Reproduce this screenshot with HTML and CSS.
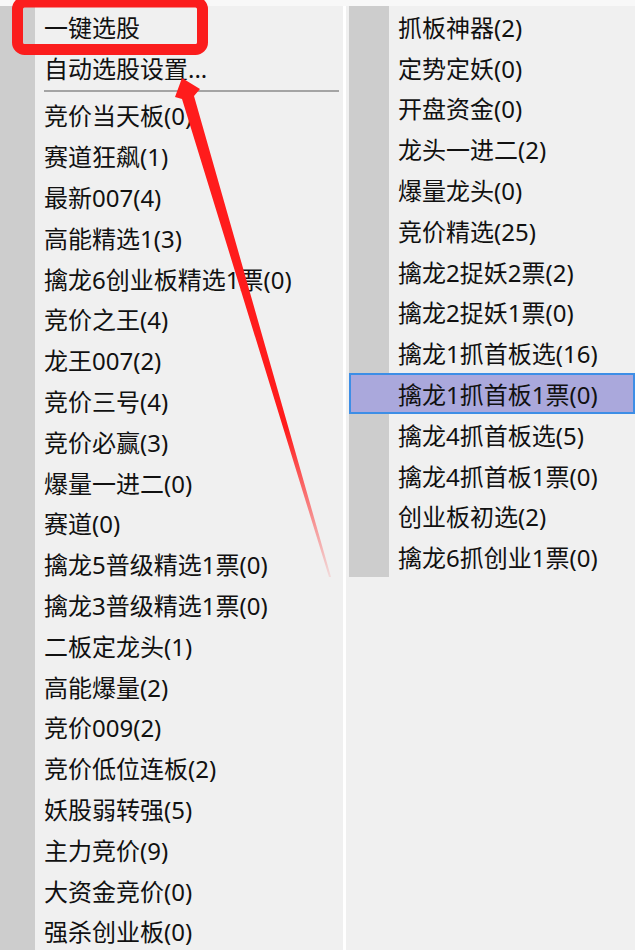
FILE: index.html
```html
<!DOCTYPE html>
<html lang="zh-CN">

<head>
    <meta charset="UTF-8">
    <meta name="viewport" content="width=device-width, initial-scale=1.0">
    <title>一键选股</title>
    <link rel="stylesheet" href="styles.css">
</head>

<body>
    <div class="screen">
        <ul class="menu menu-main">
            <li class="item">一键选股</li>
            <li class="item">自动选股设置...</li>
            <li class="sep"></li>
            <li class="item">竞价当天板(0)</li>
            <li class="item">赛道狂飙(1)</li>
            <li class="item">最新007(4)</li>
            <li class="item">高能精选1(3)</li>
            <li class="item">擒龙6创业板精选1票(0)</li>
            <li class="item">竞价之王(4)</li>
            <li class="item">龙王007(2)</li>
            <li class="item">竞价三号(4)</li>
            <li class="item">竞价必赢(3)</li>
            <li class="item">爆量一进二(0)</li>
            <li class="item">赛道(0)</li>
            <li class="item">擒龙5普级精选1票(0)</li>
            <li class="item">擒龙3普级精选1票(0)</li>
            <li class="item">二板定龙头(1)</li>
            <li class="item">高能爆量(2)</li>
            <li class="item">竞价009(2)</li>
            <li class="item">竞价低位连板(2)</li>
            <li class="item">妖股弱转强(5)</li>
            <li class="item">主力竞价(9)</li>
            <li class="item">大资金竞价(0)</li>
            <li class="item">强杀创业板(0)</li>
        </ul>

        <ul class="menu menu-sub">
            <li class="item">抓板神器(2)</li>
            <li class="item">定势定妖(0)</li>
            <li class="item">开盘资金(0)</li>
            <li class="item">龙头一进二(2)</li>
            <li class="item">爆量龙头(0)</li>
            <li class="item">竞价精选(25)</li>
            <li class="item">擒龙2捉妖2票(2)</li>
            <li class="item">擒龙2捉妖1票(0)</li>
            <li class="item">擒龙1抓首板选(16)</li>
            <li class="item active">擒龙1抓首板1票(0)</li>
            <li class="item">擒龙4抓首板选(5)</li>
            <li class="item">擒龙4抓首板1票(0)</li>
            <li class="item">创业板初选(2)</li>
            <li class="item">擒龙6抓创业1票(0)</li>
        </ul>

        <!-- red annotation drawn on top of the screenshot -->
        <svg class="markup" width="635" height="950" viewBox="0 0 635 950">
            <defs>
                <linearGradient id="fade" x1="182" y1="78" x2="330" y2="578" gradientUnits="userSpaceOnUse">
                    <stop offset="0" stop-color="#ff1c1c" />
                    <stop offset="0.7" stop-color="#ff1c1c" />
                    <stop offset="1" stop-color="#ff1c1c" stop-opacity="0.1" />
                </linearGradient>
            </defs>
            <rect x="17.5" y="2" width="185" height="47.5" rx="7" fill="none" stroke="#fb1d1d" stroke-width="11" />
            <polygon points="182,78 200,89 194,96 331,577 329,577 182,99 175,97" fill="url(#fade)" />
        </svg>
    </div>
</body>

</html>
```

FILE: styles.css
```css
:root {
    --menu-bg: #f0f0f0;
    --gutter-bg: #cdcdcd;
    --text-color: #111;
    --line-color: #a4a4a4;
    --hover-bg: #aaa8dc;
    --hover-border: #3d8ee6;
    --row-height: 40.8px;
}

* {
    margin: 0;
    padding: 0;
    box-sizing: border-box;
}

body {
    background-color: var(--menu-bg);
    font-family: "Noto Sans", "Noto Sans CJK SC", sans-serif;
    font-size: 24px;
    color: var(--text-color);
    overflow: hidden;
}

.screen {
    position: relative;
    width: 635px;
    height: 950px;
    display: flex;
    align-items: flex-start;
    border-top: 6px solid #f8f8f8;
}

.menu {
    list-style: none;
    background-color: var(--menu-bg);
}

.menu-main {
    width: 346px;
    height: 944px;
    padding-right: 2px;
    border-right: 3px solid;
    border-image: linear-gradient(to right, var(--line-color) 66%, #fff 66%) 1;
    background: linear-gradient(to right, var(--gutter-bg) 35px, var(--menu-bg) 35px);
}

.menu-sub {
    flex: 1;
    margin-left: 3px;
    background: linear-gradient(to right, var(--gutter-bg) 40px, var(--menu-bg) 40px);
}

.item {
    height: var(--row-height);
    display: flex;
    align-items: center;
    white-space: nowrap;
}

.menu-main .item {
    padding-left: 44px;
}

.menu-sub .item {
    padding-left: 49px;
}

.menu-sub .item.active {
    background-color: var(--hover-bg);
    border: 2px solid var(--hover-border);
    padding-left: 47px;
}

.sep {
    height: 7px;
    margin-left: 44px;
    margin-right: 2px;
    padding-top: 2px;
}

.sep::before {
    content: "";
    display: block;
    height: 2px;
    background-color: var(--line-color);
}

.markup {
    position: absolute;
    top: -6px;
    left: 0;
    pointer-events: none;
}
```
